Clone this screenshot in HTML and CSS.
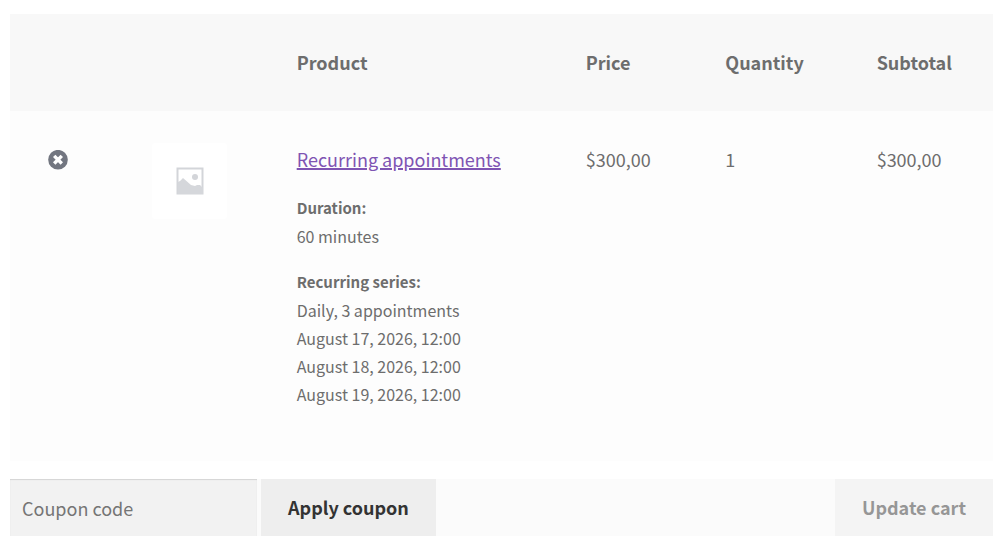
FILE: index.html
```html
<!DOCTYPE html>
<html lang="en">
<head>
  <meta charset="UTF-8">
  <meta name="viewport" content="width=device-width, initial-scale=1.0">
  <title>Cart</title>
  <link rel="stylesheet" href="styles.css">
</head>
<body>
  <form class="cart-form">
    <table class="cart">
      <colgroup>
        <col class="col-remove">
        <col class="col-thumbnail">
        <col class="col-name">
        <col class="col-price">
        <col class="col-quantity">
        <col class="col-subtotal">
      </colgroup>
      <thead>
        <tr>
          <td></td>
          <td></td>
          <th scope="col">Product</th>
          <th scope="col">Price</th>
          <th scope="col">Quantity</th>
          <th scope="col">Subtotal</th>
        </tr>
      </thead>
      <tbody>
        <tr>
          <td>
            <a href="#" class="remove" aria-label="Remove this item">
              <svg viewBox="0 0 20 20" width="20" height="20">
                <circle cx="10" cy="9.700" r="9.800" fill="#727680"/>
                <path d="M6.200 5.900l7.600 7.600M13.800 5.900l-7.600 7.600" stroke="#fff" stroke-width="3.400"/>
              </svg>
            </a>
          </td>
          <td>
            <a href="#" class="thumbnail" aria-label="Recurring appointments">
              <svg viewBox="0 0 28 28" width="28" height="28">
                <rect x="1.500" y="1.500" width="25" height="25" fill="#fff" stroke="#d3d5d9" stroke-width="2"/>
                <path d="M2 15l2-1 3-3 8 7 4 1 2-1h3l3 3v6H2z" fill="#d5d7db"/>
                <circle cx="19" cy="10" r="3" fill="#d3d5d9"/>
              </svg>
            </a>
          </td>
          <td>
            <a href="#" class="product-link">Recurring appointments</a>
            <dl class="variation">
              <dt>Duration:</dt>
              <dd>60 minutes</dd>
              <dt>Recurring series:</dt>
              <dd>Daily, 3 appointments<br>August 17, 2026, 12:00<br>August 18, 2026, 12:00<br>August 19, 2026, 12:00</dd>
            </dl>
          </td>
          <td>$300,00</td>
          <td>1</td>
          <td>$300,00</td>
        </tr>
      </tbody>
    </table>

    <div class="actions">
      <input type="text" class="coupon-code" placeholder="Coupon code" aria-label="Coupon code">
      <button type="button" class="button">Apply coupon</button>
      <button type="button" class="button update-cart" disabled>Update cart</button>
    </div>
  </form>
</body>
</html>
```
FILE: styles.css
```css
* {
  box-sizing: border-box;
}

body {
  margin: 0;
  background-color: #fff;
  color: #6d6d6d;
  font-family: "Source Sans Pro", "Noto Sans CJK SC", sans-serif;
  font-size: 18px;
  line-height: 33px;
}

.cart-form {
  margin: 14px 14px 24px 10px;
}

.cart {
  width: 100%;
  table-layout: fixed;
  border-collapse: collapse;
}

.col-remove {
  width: 10.6%;
}

.col-thumbnail {
  width: 14.7%;
}

.col-name {
  width: 29.4%;
}

.col-price {
  width: 14.2%;
}

.col-quantity {
  width: 15.4%;
}

.cart th,
.cart td {
  padding: 32px 0 32px 38px;
  text-align: left;
  vertical-align: top;
}

.cart th {
  font-weight: 600;
}

.cart thead {
  background-color: #f8f8f8;
}

.cart tbody {
  background-color: #fdfdfd;
}

.remove {
  display: flex;
  align-items: center;
  height: 33px;
}

.thumbnail {
  display: flex;
  align-items: center;
  justify-content: center;
  width: 75px;
  height: 76px;
  border-radius: 3px;
  background-color: #fff;
}

.product-link {
  color: #7f54b3;
  text-decoration-thickness: 2px;
}

/* Booking details under the product name */
.variation {
  margin: 18px 0 21px;
  font-size: 16px;
  line-height: 28px;
}

.variation dt {
  font-size: 15px;
  font-weight: 600;
}

.variation dd {
  margin: 0 0 18px;
}

.variation dd:last-child {
  margin-bottom: 0;
}

.cart tbody td {
  padding-bottom: 32px;
}

.actions {
  display: flex;
  gap: 4px;
  margin-top: 18px;
  background-color: #fbfbfb;
}

.coupon-code {
  width: 247px;
  height: 57px;
  padding: 0 12px;
  border: 0;
  background-color: #f2f2f2;
  box-shadow: inset 0 1px 1px rgba(0, 0, 0, 0.125);
  color: #43454b;
  font: inherit;
}

.coupon-code::placeholder {
  color: #757575;
}

.button {
  height: 57px;
  padding: 0 27px;
  border: 0;
  background-color: #eee;
  color: #333;
  font: inherit;
  font-weight: 600;
  cursor: pointer;
}

.update-cart {
  margin-left: auto;
}

.button:disabled {
  opacity: 0.5;
  cursor: not-allowed;
}
```
